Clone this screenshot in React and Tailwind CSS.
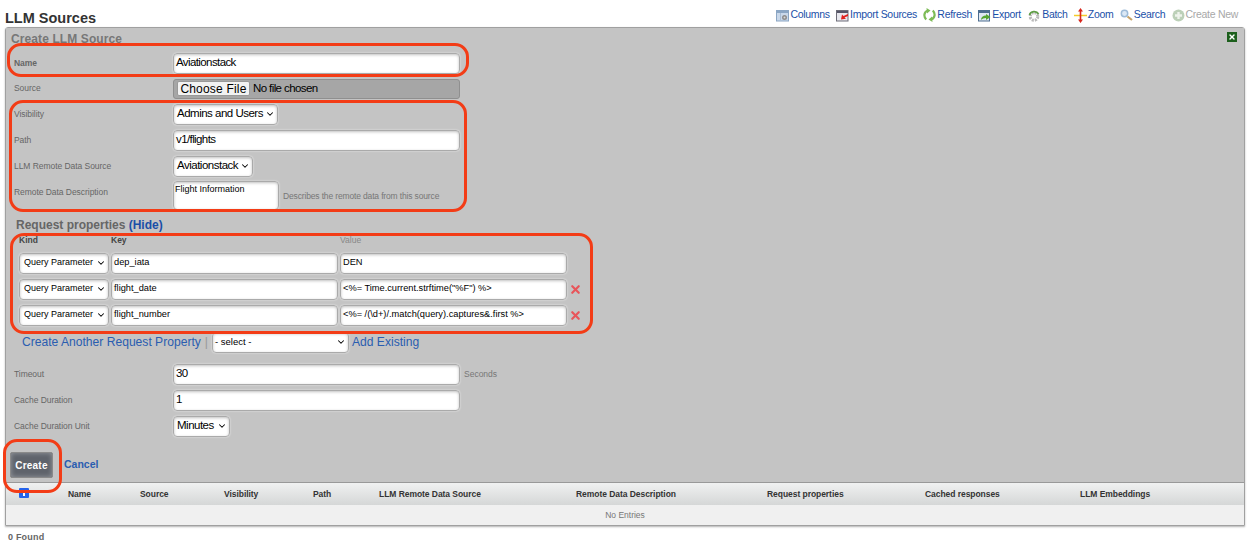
import { ChevronDown, X } from 'lucide-react';

const SANS = 'font-["Liberation_Sans",Arial,sans-serif]';
const LABEL = 'w-[159px] shrink-0 text-[8.5px] text-[#666] tracking-[-0.05px]';
const FIELD = 'h-[21px] rounded-[4px] bg-white border border-[#aaa] shadow-[inset_0_1px_3px_rgba(0,0,0,0.25),0_0_2px_rgba(255,255,255,0.7)] text-black';

const COLUMNS = [
  ['Name', 68],
  ['Source', 140],
  ['Visibility', 224],
  ['Path', 313],
  ['LLM Remote Data Source', 379],
  ['Remote Data Description', 576],
  ['Request properties', 767],
  ['Cached responses', 925],
  ['LLM Embeddings', 1080],
];

const PROPERTIES = [
  { key: 'dep_iata', value: 'DEN', removable: false },
  { key: 'flight_date', value: '<%= Time.current.strftime("%F") %>', removable: true },
  { key: 'flight_number', value: '<%= /(\\d+)/.match(query).captures&.first %>', removable: true },
];

function ToolIcon({ name }) {
  if (name === 'columns') {
    return (
      <svg width="13" height="13" viewBox="0 0 13 13">
        <rect x="0.5" y="1.5" width="12" height="10.5" fill="#c9d8ea" stroke="#8ba6c4" />
        <path d="M1 2h11v2H1z" fill="#8ba6c4" />
        <path d="M4.500 4v7" stroke="#a9bdd4" />
        <circle cx="8.500" cy="8.500" r="2.500" fill="#8d8d8d" />
        <circle cx="8.500" cy="8.500" r="1" fill="#d8d8d8" />
      </svg>
    );
  }
  if (name === 'import') {
    return (
      <svg width="13" height="13" viewBox="0 0 13 13">
        <rect x="0.5" y="1.5" width="11.500" height="10.500" fill="#e8e8ee" stroke="#6d6d78" />
        <path d="M1 2h11v2H1z" fill="#565668" />
        <path d="M12 5 7.500 7 6 5.500 5 10.500l5-.7-1.500-1.400L12 7z" fill="#e0201c" />
      </svg>
    );
  }
  if (name === 'refresh') {
    return (
      <svg width="13" height="14" viewBox="0 0 13 14" fill="none">
        <path d="M3.200 11.500C0.300 8.500 1 4 4.500 2.700M9.800 2.500c2.900 3 2.200 7.500-1.300 8.800" stroke="#7dbb56" strokeWidth="2.200" />
        <path d="M3.500 0 7.500 2.600 4 5.500zM9.500 14 5.500 11.400 9 8.500z" fill="#7dbb56" />
      </svg>
    );
  }
  if (name === 'export') {
    return (
      <svg width="13" height="13" viewBox="0 0 13 13">
        <rect x="0.5" y="1.5" width="11" height="10.500" fill="#dfe8f2" stroke="#4d6d8f" />
        <path d="M1 2h10v2H1z" fill="#4d6d8f" />
        <path d="M3 11c0-3 2-4.500 5-4.500V5l4.500 3L8 11V9c-2 0-4 .7-5 2z" fill="#55a630" />
      </svg>
    );
  }
  if (name === 'batch') {
    return (
      <svg width="14" height="13" viewBox="0 0 14 13" fill="none">
        <circle cx="7" cy="7.500" r="3.800" stroke="#b9b9b9" strokeWidth="3" strokeDasharray="2 1" />
        <path d="M2.500 6C3.500 2 9.500 1.500 11.500 5" stroke="#5f9e45" strokeWidth="1.800" />
      </svg>
    );
  }
  if (name === 'zoom') {
    return (
      <svg width="13" height="15" viewBox="0 0 13 15">
        <path d="M0 7.500h13" stroke="#f4cc2a" strokeWidth="1.500" />
        <path d="M6.500 0 9 3.500H7.300v8H9L6.500 15 4 11.500h1.700v-8H4z" fill="#d8261c" />
      </svg>
    );
  }
  if (name === 'search') {
    return (
      <svg width="13" height="13" viewBox="0 0 13 13" fill="none">
        <circle cx="4.500" cy="4.500" r="3.200" fill="#dbe8f5" stroke="#9dbbd8" strokeWidth="1.500" />
        <path d="M7.500 7.500l4.500 3.500" stroke="#c7a36a" strokeWidth="2.200" />
      </svg>
    );
  }
  return (
    <svg width="13" height="13" viewBox="0 0 13 13">
      <circle cx="6.500" cy="6.500" r="6" fill="#bcd0b8" />
      <path d="M5.300 3h2.400v2.300H10v2.400H7.700V10H5.300V7.700H3V5.300h2.300z" fill="#eef3ec" />
    </svg>
  );
}

function Tool({ name, label, muted }) {
  return (
    <span className={`flex items-center gap-[1px] tracking-[-0.3px] ${muted ? 'text-[#a8a8a8]' : 'text-[#1a4fa8]'}`}>
      <ToolIcon name={name} />
      {label}
    </span>
  );
}

function FakeSelect({ label, width, className = 'text-[11.5px] tracking-[-0.5px] pl-[3px]' }) {
  return (
    <div className={`${FIELD} ${className} flex items-center justify-between pr-[2px]`} style={{ width }}>
      <span className="whitespace-nowrap">{label}</span>
      <ChevronDown size={10} strokeWidth={2.5} className="shrink-0" />
    </div>
  );
}

function FakeInput({ value, width = 287, className = 'text-[11.5px] tracking-[-0.6px]' }) {
  return (
    <div className={`${FIELD} ${className} flex items-center pl-[2px] whitespace-nowrap overflow-hidden`} style={{ width }}>
      {value}
    </div>
  );
}

function Row({ label, bold, className = 'h-[26px] items-center', labelClass = '', children }) {
  return (
    <div className={`flex ${className}`}>
      <div className={`${LABEL} ${labelClass} ${bold ? 'font-bold' : ''}`}>{label}</div>
      {children}
    </div>
  );
}

function Outline({ className }) {
  return <div className={`absolute border-[3px] border-[#f33c16] pointer-events-none ${className}`} />;
}

export default function App() {
  return (
    <div className={`${SANS} relative w-[1250px] h-[551px] bg-white overflow-hidden`}>
      <div className="flex items-center justify-between h-[27px] pl-[5px] pr-[12px]">
        <h1 className="text-[14.5px] font-bold text-[#333] pt-[10px]">LLM Sources</h1>
        <div className="flex items-center gap-[6.3px] text-[10.5px] pt-[3px]">
          <Tool name="columns" label="Columns" />
          <Tool name="import" label="Import Sources" />
          <Tool name="refresh" label="Refresh" />
          <Tool name="export" label="Export" />
          <Tool name="batch" label="Batch" />
          <Tool name="zoom" label="Zoom" />
          <Tool name="search" label="Search" />
          <Tool name="create" label="Create New" muted />
        </div>
      </div>

      <div className="mx-[5px] border border-[#a0a0a0] rounded-t-[3px] shadow-[0_1px_2px_rgba(0,0,0,0.3)]">
        <div className="relative h-[454px] bg-[#c4c4c4] pl-[8px]">
          <div className="absolute top-[4px] right-[7px] w-[10px] h-[10px] bg-[#1c5f1c] flex items-center justify-center">
            <X size={8} strokeWidth={4} className="text-white" />
          </div>
          <h2 className="text-[12px] font-bold text-[#777] h-[22px] pt-[2px] -ml-[3px] tracking-[0.1px]">Create LLM Source</h2>

          <Row label="Name" bold>
            <FakeInput value="Aviationstack" />
          </Row>
          <Row label="Source" className="h-[25px] items-center">
            <div className="h-[20px] w-[287px] rounded-[3px] bg-[#a6a6a6] border border-[#8f8f8f] flex items-center pl-[3px] gap-[3px] text-[11.5px] text-black">
              <span className="h-[15px] w-[73px] bg-[#f2f2f2] border border-[#999] rounded-[2px] flex items-center justify-center text-[12px] tracking-[0.2px]">Choose File</span>
              <span className="tracking-[-0.6px]">No file chosen</span>
            </div>
          </Row>
          <Row label="Visibility">
            <FakeSelect label="Admins and Users" width={105} />
          </Row>
          <Row label="Path">
            <FakeInput value="v1/flights" />
          </Row>
          <Row label="LLM Remote Data Source">
            <FakeSelect label="Aviationstack" width={80} />
          </Row>
          <Row label="Remote Data Description" className="h-[32px] items-start pt-[2px]" labelClass="pt-[5px]">
            <div className={`${FIELD} h-[29px]! w-[106px] text-[9px] pl-[1px] leading-[14px]`}>Flight Information</div>
            <span className="ml-[4px] mt-[9px] text-[8.5px] text-[#777] tracking-[-0.15px]">Describes the remote data from this source</span>
          </Row>

          <div className="text-[12px] font-bold text-[#666] mt-[6px] ml-[2px] h-[17px] leading-[17px]">
            Request properties <span className="text-[#1a4fa8]">(Hide)</span>
          </div>

          <div className="flex text-[8.5px] font-bold text-[#444] h-[11px] mt-[1px] leading-[11px]">
            <span className="ml-[5px] w-[92px]">Kind</span>
            <span className="w-[229px]">Key</span>
            <span className="font-normal text-[#888]">Value</span>
          </div>
          <div className="mt-[7px] flex flex-col gap-[6px]">
            {PROPERTIES.map((p) => (
              <div key={p.key} className="flex items-center gap-[2px] ml-[5px] h-[20px]">
                <FakeSelect label="Query Parameter" width={90} className="text-[9px] pl-[4px]" />
                <FakeInput value={p.key} width={227} className="text-[9.25px]" />
                <FakeInput value={p.value} width={227} className="text-[9.25px]" />
                {p.removable && <X size={13} strokeWidth={4} className="text-[#e8555a]" />}
              </div>
            ))}
          </div>

          <div className="flex items-center mt-[6px] ml-[8px] h-[22px] text-[12.1px] text-[#2a5db0]">
            <span>Create Another Request Property</span>
            <span className="mx-[4px] text-[#999]">|</span>
            <FakeSelect label="- select -" width={137} className="text-[9.5px] pl-[2px]" />
            <span className="ml-[3px]">Add Existing</span>
          </div>

          <Row label="Timeout" className="h-[26px] mt-[8px] items-center">
            <FakeInput value="30" />
            <span className="ml-[4px] text-[8.5px] text-[#777]">Seconds</span>
          </Row>
          <Row label="Cache Duration">
            <FakeInput value="1" />
          </Row>
          <Row label="Cache Duration Unit">
            <FakeSelect label="Minutes" width={57} />
          </Row>

          <div className="flex items-center gap-[11px] -ml-[4px] mt-[13px]">
            <div className="w-[43px] h-[26px] rounded-[2px] bg-[#5f636b] border border-[#8a8a8a] shadow-[inset_0_0_5px_rgba(255,255,255,0.35)] flex items-center justify-center text-[10px] font-bold text-white tracking-[0.2px]">Create</div>
            <span className="text-[10.5px] font-bold text-[#2a5db0]">Cancel</span>
          </div>
        </div>

        <div className="relative h-[23px] border-t border-[#999] bg-gradient-to-b from-[#f0f1f1] to-[#d5d7d7] text-[8.5px] font-bold text-[#333] tracking-[-0.05px]">
          <div className="absolute left-[13px] top-[5px] w-[10px] h-[10px] rounded-[1px] bg-[#2563eb] flex items-center justify-center">
            <div className="w-[2px] h-[6px] bg-white" />
          </div>
          {COLUMNS.map(([label, x]) => (
            <span key={label} className="absolute top-[5px]" style={{ left: x - 6 }}>{label}</span>
          ))}
        </div>
        <div className="h-[20px] bg-[#f0f0f0] flex items-center justify-center text-[8.5px] text-[#777]">No Entries</div>
      </div>

      <div className="mt-[5px] ml-[8px] text-[9px] font-bold text-[#666] tracking-[0.2px]">0 Found</div>

      <Outline className="left-[7px] top-[43px] w-[462px] h-[34px] rounded-[14px]" />
      <Outline className="left-[9px] top-[100px] w-[458px] h-[112px] rounded-[14px]" />
      <Outline className="left-[10px] top-[233px] w-[583px] h-[101px] rounded-[14px]" />
      <Outline className="left-[3px] top-[439px] w-[59px] h-[54px] rounded-[14px]" />
    </div>
  );
}
